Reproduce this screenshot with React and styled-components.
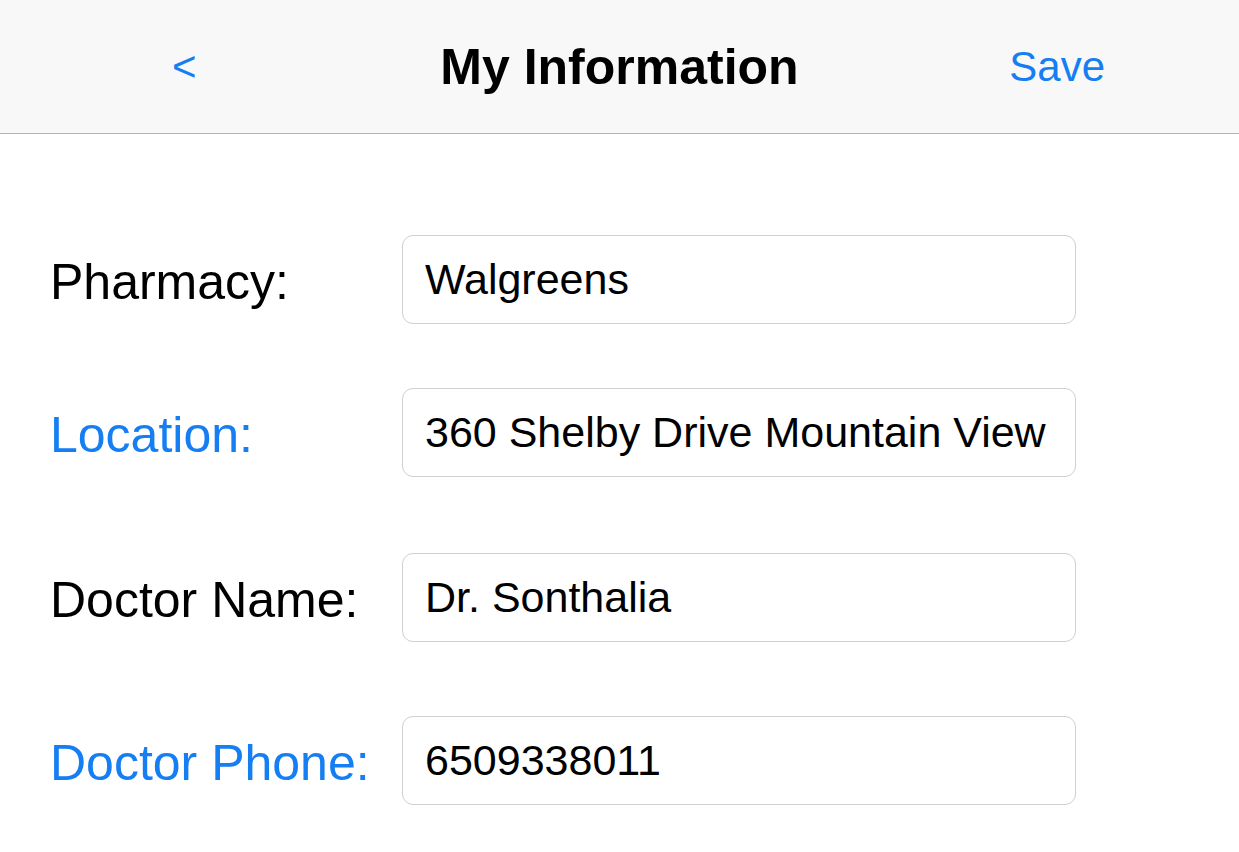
import React from 'react';
import styled, { createGlobalStyle } from 'styled-components';

const GlobalStyle = createGlobalStyle`
  html, body {
    margin: 0;
    padding: 0;
    background: #ffffff;
    font-family: "Liberation Sans", Arial, sans-serif;
  }
`

const Page = styled.div`
  width: 100%;
  min-height: 852px;
  background: #ffffff;
`

const NavBar = styled.header`
  height: 133px;
  display: grid;
  grid-template-columns: 1fr auto 1fr;
  align-items: center;
  background: #f8f8f8;
  border-bottom: 1px solid #b4b4b4;
`

const NavButton = styled.button`
  border: none;
  background: none;
  padding: 0;
  margin: 0;
  font-family: "Liberation Sans", Arial, sans-serif;
  font-size: 42px;
  color: #157ef2;
  cursor: pointer;
  justify-self: ${(p) => (p.$side === 'right' ? 'end' : 'start')};
  margin-left: ${(p) => (p.$side === 'right' ? '0' : '172px')};
  margin-right: ${(p) => (p.$side === 'right' ? '134px' : '0')};
`

const Title = styled.h1`
  margin: 0;
  font-size: 50px;
  font-weight: 700;
  color: #000000;
`

const Form = styled.main`
  padding-top: 101px;
  display: flex;
  flex-direction: column;
`

const Row = styled.div`
  display: flex;
  align-items: center;
  height: 89px;
  margin-top: ${(p) => p.$space}px;
`

const Label = styled.label`
  flex: 0 0 402px;
  box-sizing: border-box;
  padding-left: 50px;
  padding-top: 4px;
  font-size: 50px;
  color: ${(p) => (p.$accent ? '#157ef2' : '#000000')};
  white-space: nowrap;
`

const Field = styled.input`
  flex: 0 0 674px;
  box-sizing: border-box;
  width: 674px;
  height: 89px;
  margin: 0;
  padding: 0 8px 0 22px;
  border: 1px solid #d0d0d0;
  border-radius: 11px;
  background: #ffffff;
  font-family: "Liberation Sans", Arial, sans-serif;
  font-size: 43px;
  color: #000000;
  outline: none;
`

const fields = [
  { label: 'Pharmacy:', value: 'Walgreens', accent: false, space: 0 },
  { label: 'Location:', value: '360 Shelby Drive Mountain View', accent: true, space: 64 },
  { label: 'Doctor Name:', value: 'Dr. Sonthalia', accent: false, space: 76 },
  { label: 'Doctor Phone:', value: '6509338011', accent: true, space: 74 },
]

export default function App() {
  return (
    <Page>
      <GlobalStyle />
      <NavBar>
        <NavButton $side="left">&lt;</NavButton>
        <Title>My Information</Title>
        <NavButton $side="right">Save</NavButton>
      </NavBar>
      <Form>
        {fields.map((f) => (
          <Row key={f.label} $space={f.space}>
            <Label $accent={f.accent}>{f.label}</Label>
            <Field defaultValue={f.value} readOnly />
          </Row>
        ))}
      </Form>
    </Page>
  );
}
